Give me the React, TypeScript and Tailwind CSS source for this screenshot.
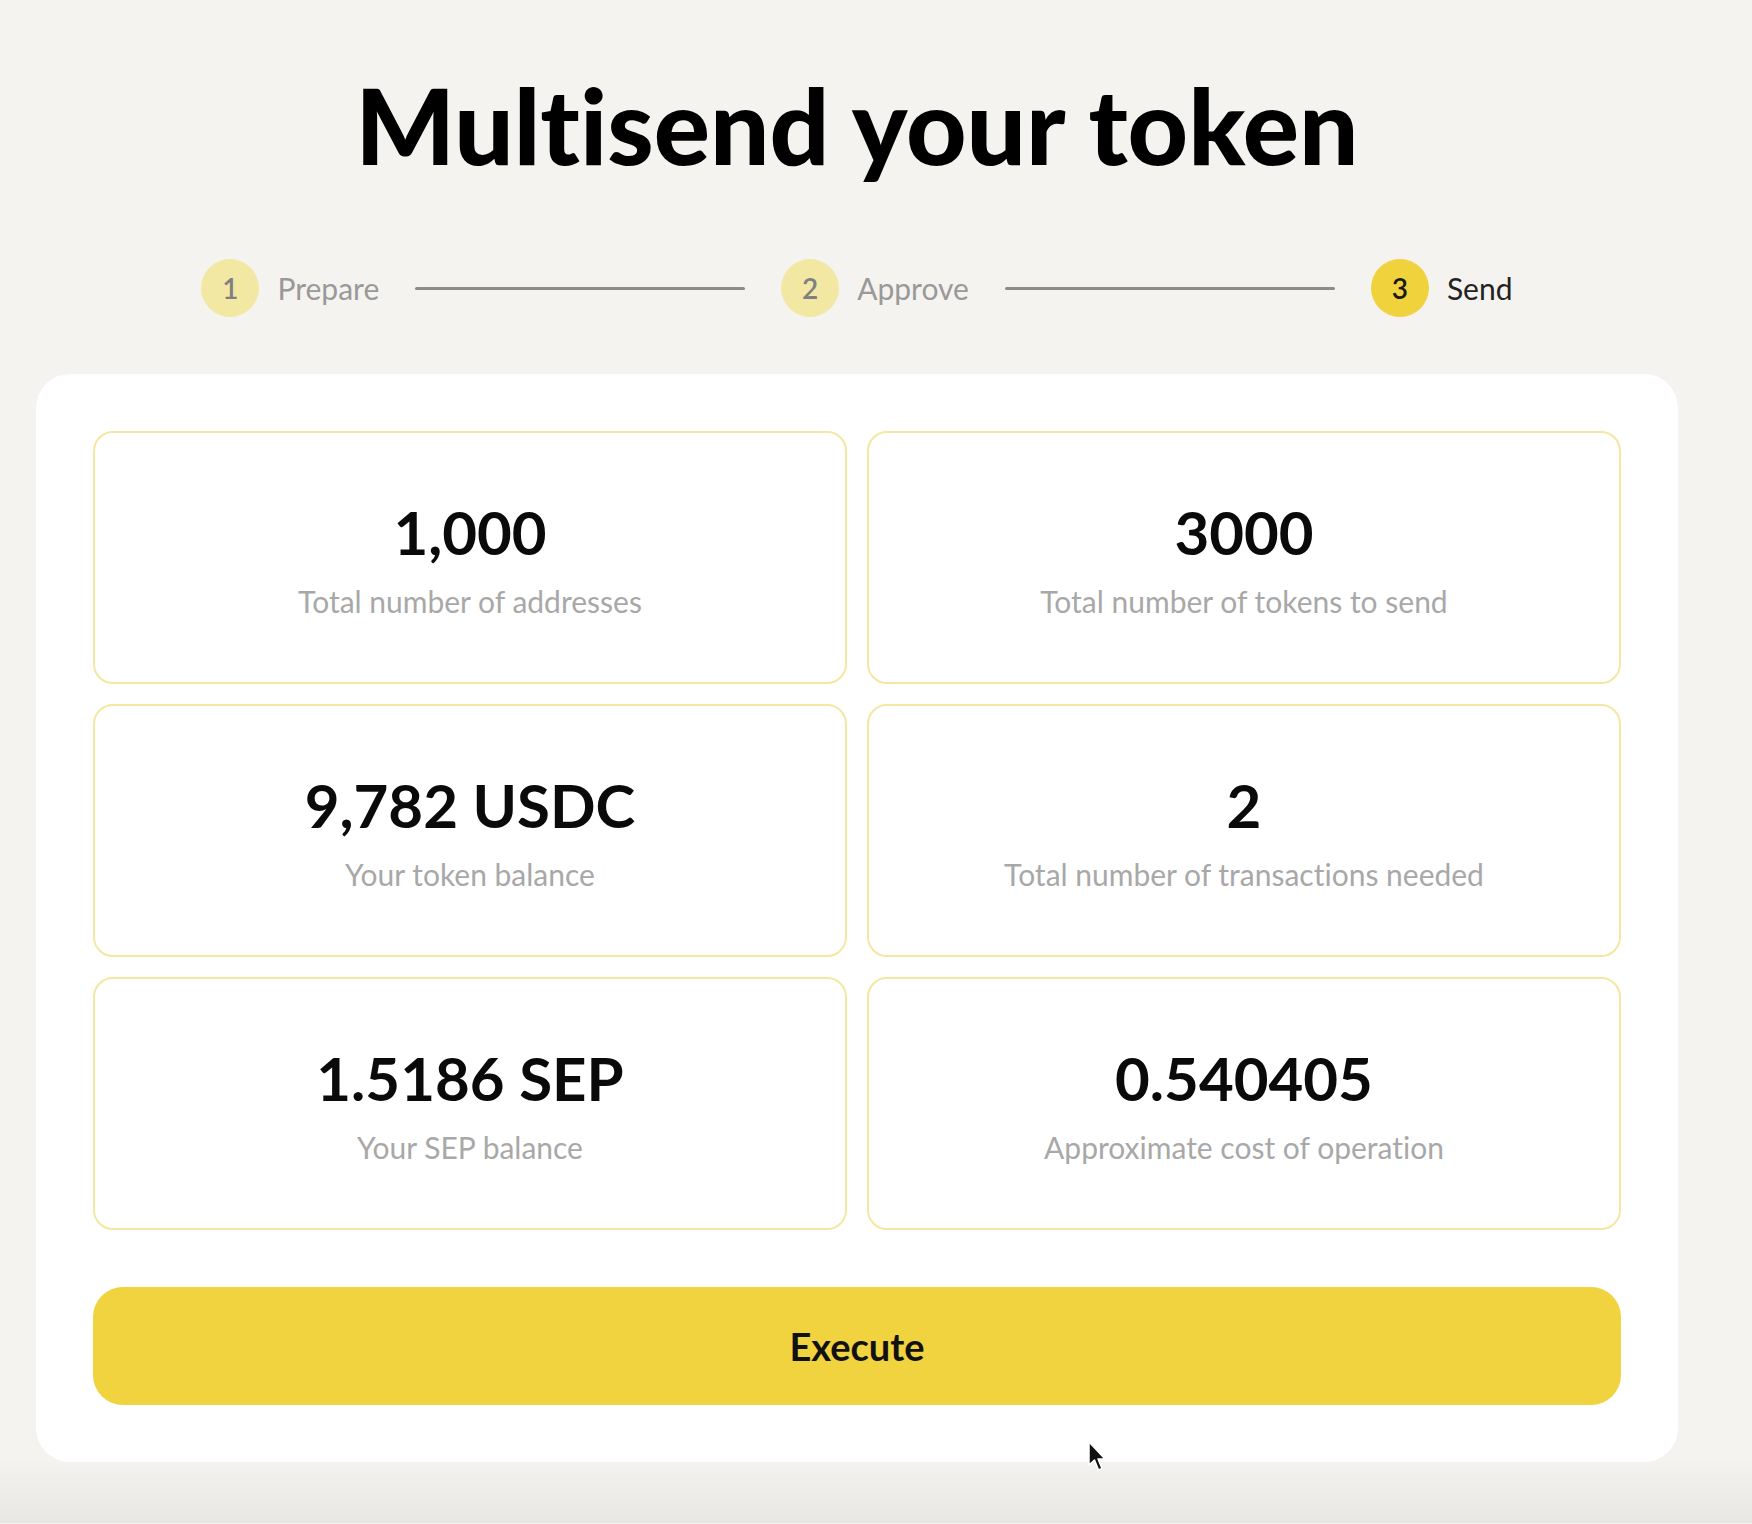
import React from 'react';

const steps = [
  { n: 1, label: 'Prepare', active: false },
  { n: 2, label: 'Approve', active: false },
  { n: 3, label: 'Send', active: true },
];

const stats = [
  { value: '1,000', label: 'Total number of addresses' },
  { value: '3000', label: 'Total number of tokens to send' },
  { value: '9,782 USDC', label: 'Your token balance' },
  { value: '2', label: 'Total number of transactions needed' },
  { value: '1.5186 SEP', label: 'Your SEP balance' },
  { value: '0.540405', label: 'Approximate cost of operation' },
];

const MultisendPage: React.FC = () => {
  return (
    <div className="relative min-h-screen bg-[#f5f3ef] font-['Lato','Noto_Sans',sans-serif] text-black [font-variant-ligatures:none]">
      <div className="w-[1642px] ml-[36px] pt-[61px] flex flex-col items-center">
        <h1 className="text-[105px] leading-[1.2] font-black">Multisend your token</h1>

        {/* stepper */}
        <div className="mt-[72px] flex items-center h-[58px]">
          {steps.map((s, i) => (
            <React.Fragment key={s.n}>
              <div className="flex items-center">
                <div
                  className={
                    s.active
                      ? 'w-[58px] h-[58px] rounded-full bg-[#f0d23c] flex items-center justify-center text-[28px] font-semibold text-[#1a1a1a]'
                      : 'w-[58px] h-[58px] rounded-full bg-[#f3e8a3] flex items-center justify-center text-[28px] font-semibold text-[#808080]'
                  }
                >
                  {s.n}
                </div>
                <span className={s.active ? 'ml-[18px] text-[30px] text-[#222]' : 'ml-[18px] text-[30px] text-[#999]'}>
                  {s.label}
                </span>
              </div>
              {i < steps.length - 1 && <div className="w-[330px] h-[3px] mx-[36px] bg-[#8c8c8c] rounded-full" />}
            </React.Fragment>
          ))}
        </div>

        {/* summary card */}
        <div className="mt-[57px] w-full bg-white rounded-[34px] p-[57px] flex flex-col gap-[57px]">
          <div className="grid grid-cols-2 gap-[20px]">
            {stats.map((s) => (
              <div
                key={s.label}
                className="h-[253px] border-2 border-[#f4e7a2] rounded-[20px] flex flex-col items-center justify-center"
              >
                <div className="text-[60px] leading-[1.2] font-bold text-[#0a0a0a]">{s.value}</div>
                <div className="mt-[15px] text-[30px] leading-[1.2] text-[#a8a8a8]">{s.label}</div>
              </div>
            ))}
          </div>
          <button className="h-[118px] w-full rounded-[30px] bg-[#f1d23f] text-[38px] font-bold text-[#111]">
            Execute
          </button>
        </div>
      </div>
      <div className="h-[61px] bg-gradient-to-b from-[#f4f2ee] to-[#e9e7e3]" />

      {/* mouse pointer */}
      <svg className="absolute left-[1088px] top-[1441px]" width="20" height="32" viewBox="0 0 20 32">
        <path d="M1 1 L1 24 L6.5 19 L10.5 29 L14 27.5 L10 18 L17 18 Z" fill="#111" stroke="#fff" strokeWidth="1.5" strokeLinejoin="round" />
      </svg>
    </div>
  );
};

export default MultisendPage;
